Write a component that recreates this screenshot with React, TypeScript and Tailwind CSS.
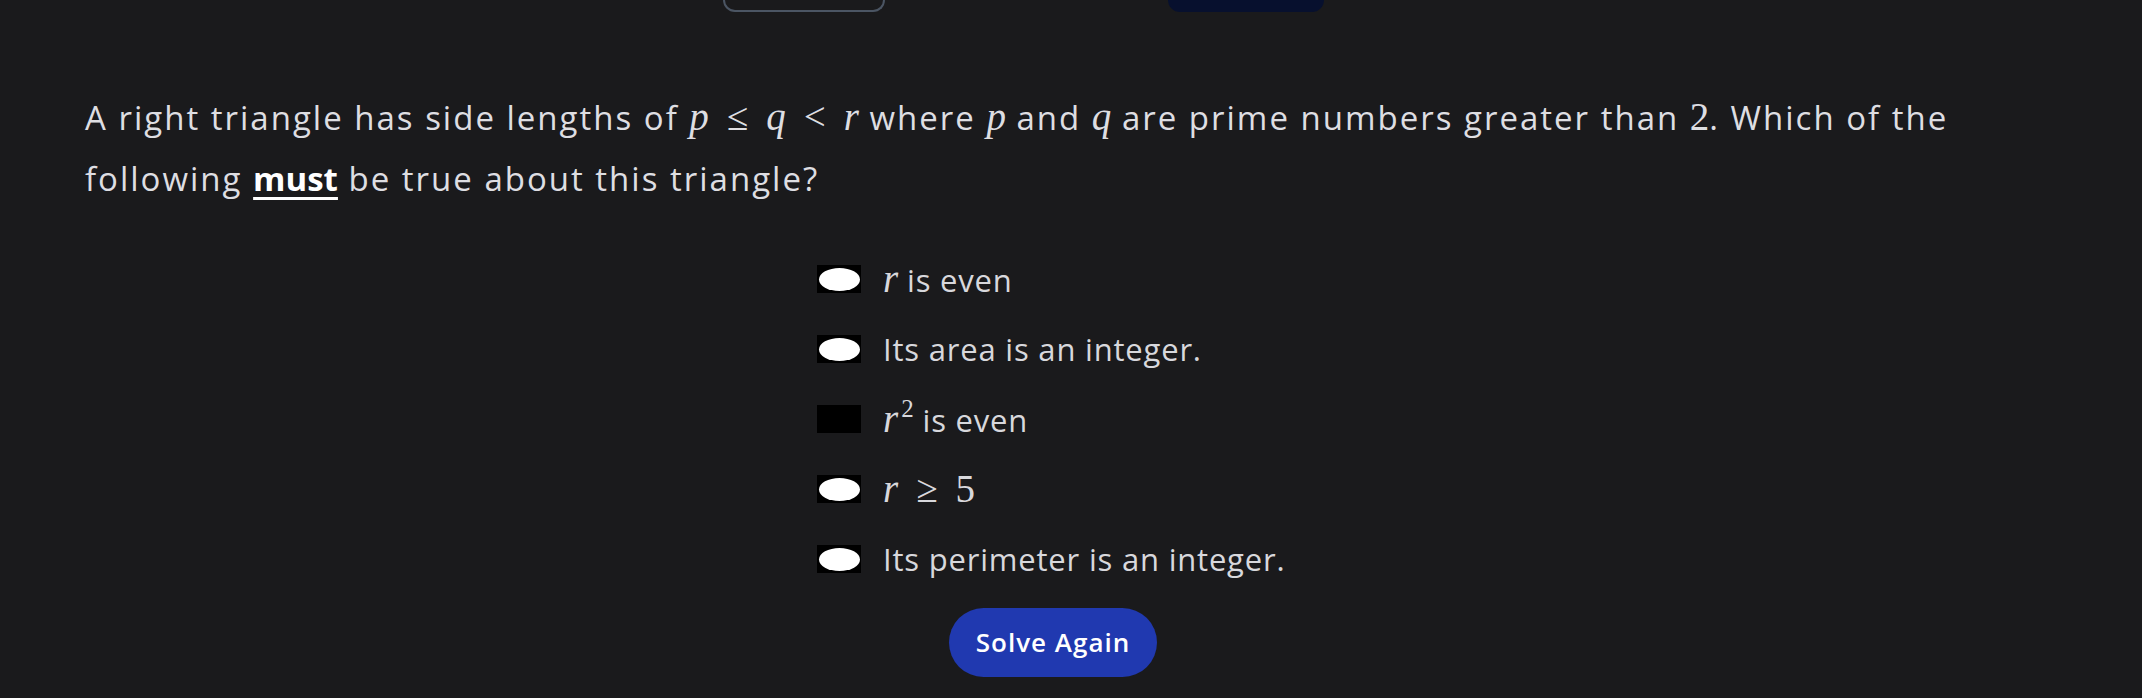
import React from 'react';

// Inline math, KaTeX-like look
const M: React.FC<{ children: React.ReactNode; italic?: boolean }> = ({ children, italic = true }) => (
  <span
    className={`font-['Liberation_Serif',serif] text-[39px] tracking-normal ${italic ? 'italic' : ''}`}
  >
    {children}
  </span>
);

const Rel: React.FC<{ children: React.ReactNode }> = ({ children }) => (
  <span className="font-['Liberation_Serif',serif] text-[39px] tracking-normal mx-[18px]">{children}</span>
);

interface Choice {
  id: number;
  content: React.ReactNode;
  checked: boolean;
}

const choices: Choice[] = [
  {
    id: 1,
    checked: true,
    content: (
      <>
        <M>r</M> is even
      </>
    ),
  },
  { id: 2, checked: true, content: <>Its area is an integer.</> },
  {
    id: 3,
    checked: false,
    content: (
      <>
        <M>r</M>
        <span className="font-['Liberation_Serif',serif] text-[25px] align-[15px] ml-[3px] tracking-normal">2</span> is even
      </>
    ),
  },
  {
    id: 4,
    checked: true,
    content: (
      <>
        <M>r</M>
        <Rel>≥</Rel>
        <M italic={false}>5</M>
      </>
    ),
  },
  { id: 5, checked: true, content: <>Its perimeter is an integer.</> },
];

const RadioBox: React.FC<{ checked: boolean }> = ({ checked }) => (
  <div className="w-[44px] h-[28px] bg-black flex items-center justify-center shrink-0">
    {checked && <div className="w-[41px] h-[23px] rounded-[50%] bg-white" />}
  </div>
);

export default function App() {
  return (
    <div className="w-[2142px] h-[698px] bg-[#1a1a1c] overflow-hidden font-['Open_Sans',sans-serif]">
      {/* header buttons cut off at the top */}
      <div className="flex h-[12px] pl-[723px] gap-[283px]">
        <div className="w-[162px] h-[12px] rounded-b-[14px] border-2 border-t-0 border-[#4b5563]" />
        <div className="w-[156px] h-[12px] rounded-b-[14px] bg-[#07102e]" />
      </div>

      <div className="ml-[85px] w-[1936px]">
        <p className="mt-[74px] text-[33px] tracking-[2px] leading-[61px] text-[#dedee2]">
          A right triangle has side lengths of <M>p</M>
          <Rel>≤</Rel>
          <M>q</M>
          <Rel>&lt;</Rel>
          <M>r</M> where <M>p</M> and <M>q</M> are prime numbers greater than{' '}
          <M italic={false}>2</M>. Which of the
          <br />
          following{' '}
          <span className="font-bold tracking-normal text-white underline decoration-[3px] underline-offset-[6px]">
            must
          </span>{' '}
          be true about this triangle?
        </p>

        <div className="flex flex-col gap-[28px] mt-[49px] ml-[732px]">
          {choices.map((c) => (
            <label
              key={c.id}
              className="flex items-center gap-[22px] h-[42px] text-[31px] tracking-[0.8px] text-[#d8d8dc]"
            >
              <RadioBox checked={c.checked} />
              <span>{c.content}</span>
            </label>
          ))}
        </div>

        <div className="flex justify-center mt-[28px]">
          <button className="w-[208px] h-[69px] rounded-full bg-[#2039b0] text-white text-[26px] tracking-[1px] font-semibold">
            Solve Again
          </button>
        </div>
      </div>
    </div>
  );
}
